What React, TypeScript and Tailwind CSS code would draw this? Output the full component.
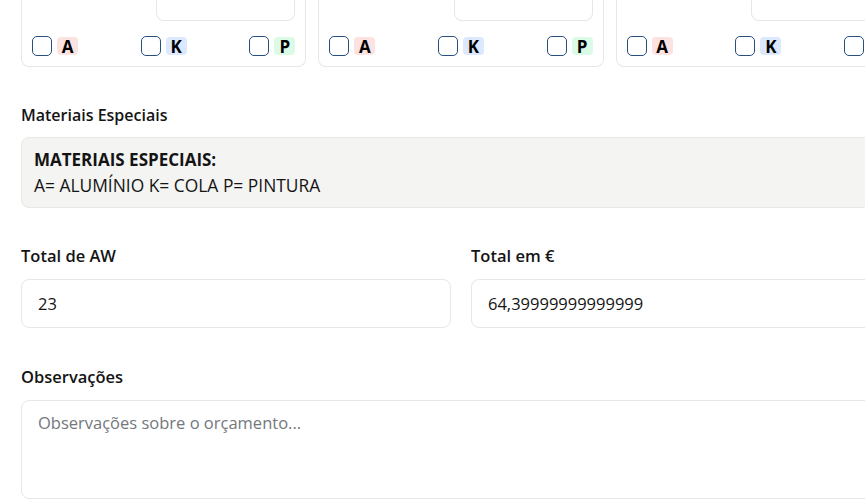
import React from 'react';

const badgeColors: Record<string, string> = {
  A: 'bg-[#fde2e2]',
  K: 'bg-[#dbe8fd]',
  P: 'bg-[#dcfbe6]',
};

const MaterialCheck = ({ code }: { code: string }) => (
  <label className="flex items-center gap-[5px]">
    <span className="w-5 h-5 rounded-[5px] border-[1.5px] border-[#27507f] bg-white" />
    <span className={`${badgeColors[code]} rounded-[4px] w-[21px] h-[18px] flex items-center justify-center text-[17px] font-bold text-black leading-none`}>
      {code}
    </span>
  </label>
);

const ItemCard = () => (
  <div className="border border-t-0 border-[#e5e7eb] rounded-b-lg px-[10px] pb-[10px] bg-white">
    <div className="flex justify-end">
      <div className="w-[139px] h-[21px] border border-t-0 border-[#e5e7eb] rounded-b-lg" />
    </div>
    <div className="flex justify-between items-center mt-[15px]">
      <MaterialCheck code="A" />
      <MaterialCheck code="K" />
      <MaterialCheck code="P" />
    </div>
  </div>
);

export default function App() {
  return (
    <div className="w-[865px] h-[504px] overflow-hidden bg-white text-[#141414] font-['Open_Sans',sans-serif]">
      <div className="w-[880px] ml-[21px] flex flex-col gap-[36px]">
        <div className="grid grid-cols-3 gap-3">
          <ItemCard />
          <ItemCard />
          <ItemCard />
        </div>

        <div>
          <label className="block text-base leading-6 font-semibold mb-[10px]">Materiais Especiais</label>
          <div className="bg-[#f4f4f3] border border-[#e8e8e6] rounded-lg px-3 py-[9px] text-[17px] leading-[25.5px]">
            <div className="font-bold">MATERIAIS ESPECIAIS:</div>
            <div className="text-[17.4px]">A= ALUMÍNIO K= COLA P= PINTURA</div>
          </div>
        </div>

        <div className="grid grid-cols-2 gap-5">
          <div>
            <label className="block text-[16.5px] leading-6 font-semibold mb-[11px]">Total de AW</label>
            <input
              readOnly
              value="23"
              className="w-full h-[49px] px-4 border border-[#e5e7eb] rounded-lg text-[16.5px] outline-none"
            />
          </div>
          <div>
            <label className="block text-[16.5px] leading-6 font-semibold mb-[11px]">Total em €</label>
            <input
              readOnly
              value="64,39999999999999"
              className="w-full h-[49px] px-4 border border-[#e5e7eb] rounded-lg text-[16.5px] outline-none"
            />
          </div>
        </div>

        <div className="mt-[1px]">
          <label className="block text-[16.5px] leading-6 font-semibold mb-[11px]">Observações</label>
          <textarea
            placeholder="Observações sobre o orçamento..."
            className="w-full h-[99px] px-4 py-[10px] border border-[#e5e7eb] rounded-lg text-[16.5px] leading-6 resize-none outline-none placeholder:text-[#74777c]"
          />
        </div>
      </div>
    </div>
  );
}
